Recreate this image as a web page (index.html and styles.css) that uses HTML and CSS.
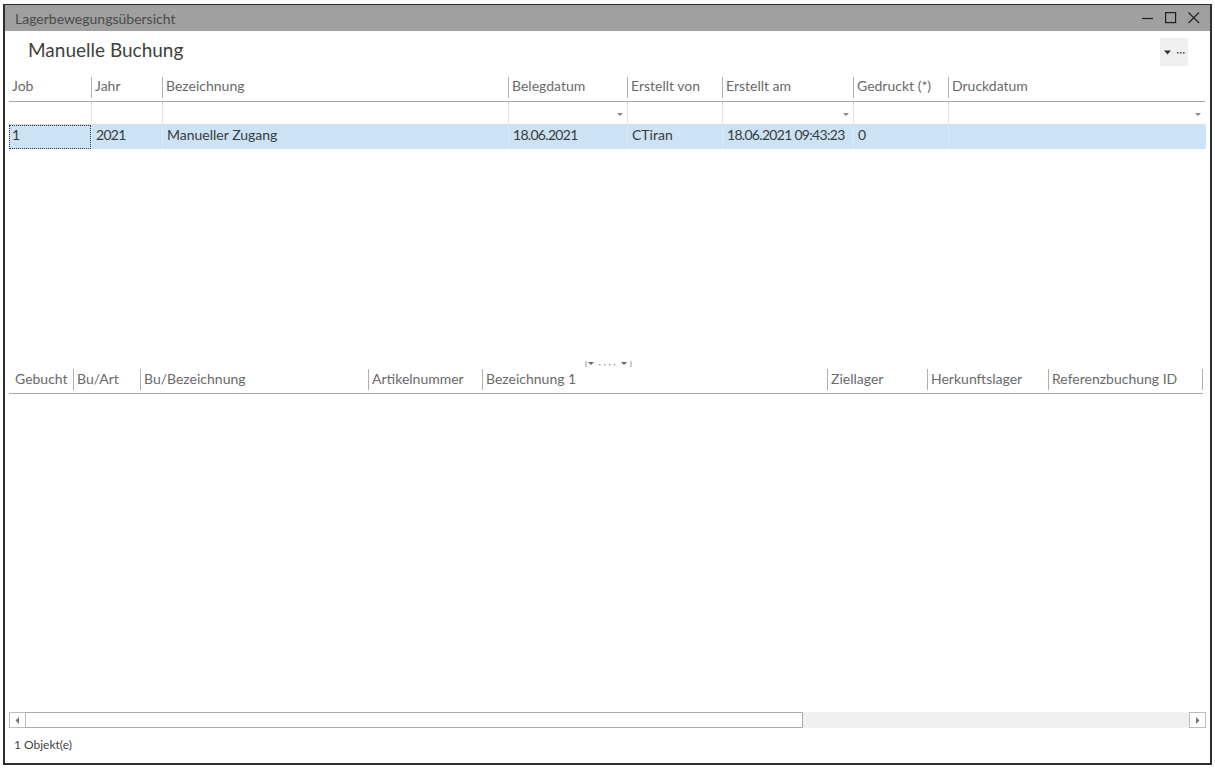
FILE: index.html
```html
<!DOCTYPE html>
<html lang="de">
<head>
<meta charset="utf-8">
<title>Lagerbewegungsübersicht</title>
<link rel="stylesheet" href="styles.css">
</head>
<body>
<div class="window">
  <div class="titlebar">
    <span class="title">Lagerbewegungsübersicht</span>
    <div class="winctrls">
      <svg class="wc" width="12" height="12" viewBox="0 0 12 12"><line x1="0" y1="6.5" x2="11" y2="6.5" stroke="#1e1e1e" stroke-width="1.2"/></svg>
      <svg class="wc" width="12" height="12" viewBox="0 0 12 12"><rect x="0.6" y="0.6" width="10" height="10" fill="none" stroke="#1e1e1e" stroke-width="1.2"/></svg>
      <svg class="wc" width="12" height="12" viewBox="0 0 12 12"><path d="M0.5 0.5 L11 11 M11 0.5 L0.5 11" stroke="#1e1e1e" stroke-width="1.1" fill="none"/></svg>
    </div>
  </div>

  <div class="heading">
    <h1>Manuelle Buchung</h1>
    <div class="menubtn">
      <svg width="7" height="5" viewBox="0 0 7 5"><path d="M0 0.5 H7 L3.5 4.5 Z" fill="#333"/></svg>
      <svg width="8" height="3" viewBox="0 0 8 3"><rect x="0" y="1" width="1.6" height="1.6" fill="#555"/><rect x="3" y="1" width="1.6" height="1.6" fill="#555"/><rect x="6" y="1" width="1.6" height="1.6" fill="#555"/></svg>
    </div>
  </div>

  <div class="toppane">
    <div class="grid top-grid">
      <div class="hcell first">Job</div>
      <div class="hcell">Jahr</div>
      <div class="hcell">Bezeichnung</div>
      <div class="hcell">Belegdatum</div>
      <div class="hcell">Erstellt von</div>
      <div class="hcell">Erstellt am</div>
      <div class="hcell">Gedruckt (*)</div>
      <div class="hcell">Druckdatum</div>
    </div>
    <div class="grid top-grid filter">
      <div class="fcell first"></div>
      <div class="fcell"></div>
      <div class="fcell"></div>
      <div class="fcell drop"><span class="arrow"></span></div>
      <div class="fcell"></div>
      <div class="fcell drop"><span class="arrow"></span></div>
      <div class="fcell"></div>
      <div class="fcell drop"><span class="arrow"></span></div>
    </div>
    <div class="grid top-grid datarow">
      <div class="dcell first focus num">1</div>
      <div class="dcell num">2021</div>
      <div class="dcell">Manueller Zugang</div>
      <div class="dcell num">18.06.2021</div>
      <div class="dcell">CTiran</div>
      <div class="dcell num">18.06.2021 09:43:23</div>
      <div class="dcell num">0</div>
      <div class="dcell"></div>
    </div>
  </div>

  <div class="splitter">
    <svg width="48" height="8" viewBox="0 0 48 8">
      <rect x="0.5" y="1" width="1" height="6" fill="#999"/>
      <path d="M3 2 H9 L6 5 Z" fill="#666"/>
      <rect x="14" y="4" width="1.4" height="1.4" fill="#999"/>
      <rect x="19" y="4" width="1.4" height="1.4" fill="#999"/>
      <rect x="24" y="4" width="1.4" height="1.4" fill="#999"/>
      <rect x="29" y="4" width="1.4" height="1.4" fill="#999"/>
      <path d="M36 2 H42 L39 5 Z" fill="#666"/>
      <rect x="45.5" y="1" width="1" height="6" fill="#999"/>
    </svg>
  </div>

  <div class="bottompane">
    <div class="grid bottom-grid">
      <div class="hcell b first">Gebucht</div>
      <div class="hcell b">Bu/Art</div>
      <div class="hcell b">Bu/Bezeichnung</div>
      <div class="hcell b">Artikelnummer</div>
      <div class="hcell b">Bezeichnung 1</div>
      <div class="hcell b">Ziellager</div>
      <div class="hcell b">Herkunftslager</div>
      <div class="hcell b last">Referenzbuchung ID</div>
    </div>
    <div class="bottom-body"></div>
    <div class="hscroll">
      <div class="sbtn"><svg width="5" height="7" viewBox="0 0 5 7"><path d="M4 0 V7 L0.5 3.5 Z" fill="#777"/></svg></div>
      <div class="thumb"></div>
      <div class="track"></div>
      <div class="sbtn"><svg width="5" height="7" viewBox="0 0 5 7"><path d="M1 0 V7 L4.5 3.5 Z" fill="#777"/></svg></div>
    </div>
  </div>

  <div class="status">1 Objekt(e)</div>
</div>
</body>
</html>
```

FILE: styles.css
```css
* { box-sizing: border-box; }
html, body { margin: 0; padding: 0; background: #fff; }
body {
  font-family: "Lato", "Open Sans", sans-serif;
  color: #333;
}
.window {
  margin: 4px 0 0 3px;
  width: 1209px;
  height: 761px;
  border: 2px solid #2e2e2e;
  border-top-width: 1px;
  display: flex;
  flex-direction: column;
  background: #fff;
}
.titlebar {
  height: 26px;
  background: #a0a0a0;
  display: flex;
  align-items: center;
  justify-content: space-between;
  padding: 0 0 0 10px;
  flex: none;
}
.title {
  font-size: 14px;
  color: #4a4a4a;
}
.winctrls {
  display: flex;
  gap: 11px;
  padding-right: 10px;
  align-items: center;
}
.wc { display: block; }
.heading {
  height: 45px;
  display: flex;
  align-items: flex-start;
  justify-content: space-between;
  padding: 0 20px 0 23px;
  flex: none;
}
.heading h1 {
  margin: 7px 0 0 0;
  font-size: 19px;
  font-weight: normal;
  color: #404040;
  line-height: 24px;
}
.menubtn {
  margin-top: 7px;
  margin-right: 2px;
  width: 28px;
  height: 28px;
  background: #efefef;
  display: flex;
  align-items: center;
  justify-content: center;
  gap: 6px;
}
.menubtn svg { display: block; }
.toppane {
  flex: 1;
  padding: 0 4px 0 4px;
}
.grid { display: grid; }
.top-grid {
  grid-template-columns: 82px 71px 346px 119px 95px 131px 95px 257px;
}
.bottom-grid {
  grid-template-columns: 64px 67px 228px 114px 345px 100px 121px 155px;
  width: 1194px;
}
.hcell {
  height: 26px;
  border-bottom: 1px solid #a8a8a8;
  font-size: 14px;
  color: #6a6a6a;
  padding: 1px 0 0 4px;
  line-height: 17px;
  position: relative;
  white-space: nowrap;
}
.hcell::before {
  content: "";
  position: absolute;
  left: 0;
  top: 1px;
  height: 21px;
  width: 1px;
  background: #b0b0b0;
}
.hcell.first { padding-left: 3px; }
.hcell.first::before { display: none; }
.hcell.b { padding-left: 4px; padding-top: 2px; }
.hcell.b.first { padding-left: 6px; }
.hcell.b.last::after {
  content: "";
  position: absolute;
  right: 0;
  top: 1px;
  height: 21px;
  width: 1px;
  background: #b0b0b0;
}
.filter .fcell {
  height: 23px;
  border-left: 1px solid #e3e3e3;
  border-bottom: 1px solid #dcdcdc;
  position: relative;
}
.filter .fcell.first { border-left: none; }
.arrow {
  position: absolute;
  right: 4px;
  top: 11px;
  width: 0;
  height: 0;
  border-left: 3px solid transparent;
  border-right: 3px solid transparent;
  border-top: 3px solid #888;
}
.datarow { background: #cce3f6; }
.dcell {
  height: 24px;
  font-size: 14px;
  color: #3a3a3a;
  padding: 1px 0 0 4px;
  line-height: 18px;
  border-left: 1px solid #ddeaf5;
  white-space: nowrap;
}
.dcell.num { letter-spacing: -0.7px; }
.dcell.first { border-left: none; padding-left: 3px; }
.dcell.focus { outline: 1px dotted #333; outline-offset: -1px; }
.splitter {
  height: 14px;
  flex: none;
  display: flex;
  justify-content: center;
  align-items: flex-start;
  padding: 6px 0 0 2px;
}
.splitter svg { display: block; }
.bottompane {
  height: 361px;
  flex: none;
  display: flex;
  flex-direction: column;
  padding: 0 4px;
}
.bottom-body { flex: 1; }
.hscroll {
  height: 16px;
  display: flex;
  background: #f0f0f0;
  margin-bottom: 1px;
  flex: none;
}
.sbtn {
  width: 17px;
  height: 16px;
  border: 1px solid #bdbdbd;
  background: #fff;
  display: flex;
  align-items: center;
  justify-content: center;
}
.sbtn svg { display: block; }
.thumb {
  width: 777px;
  height: 16px;
  border: 1px solid #a9a9a9;
  border-left: none;
  background: #fff;
}
.track { flex: 1; }
.status {
  flex: none;
  height: 34px;
  font-size: 12px;
  color: #444;
  padding: 8px 0 0 9px;
}
```
